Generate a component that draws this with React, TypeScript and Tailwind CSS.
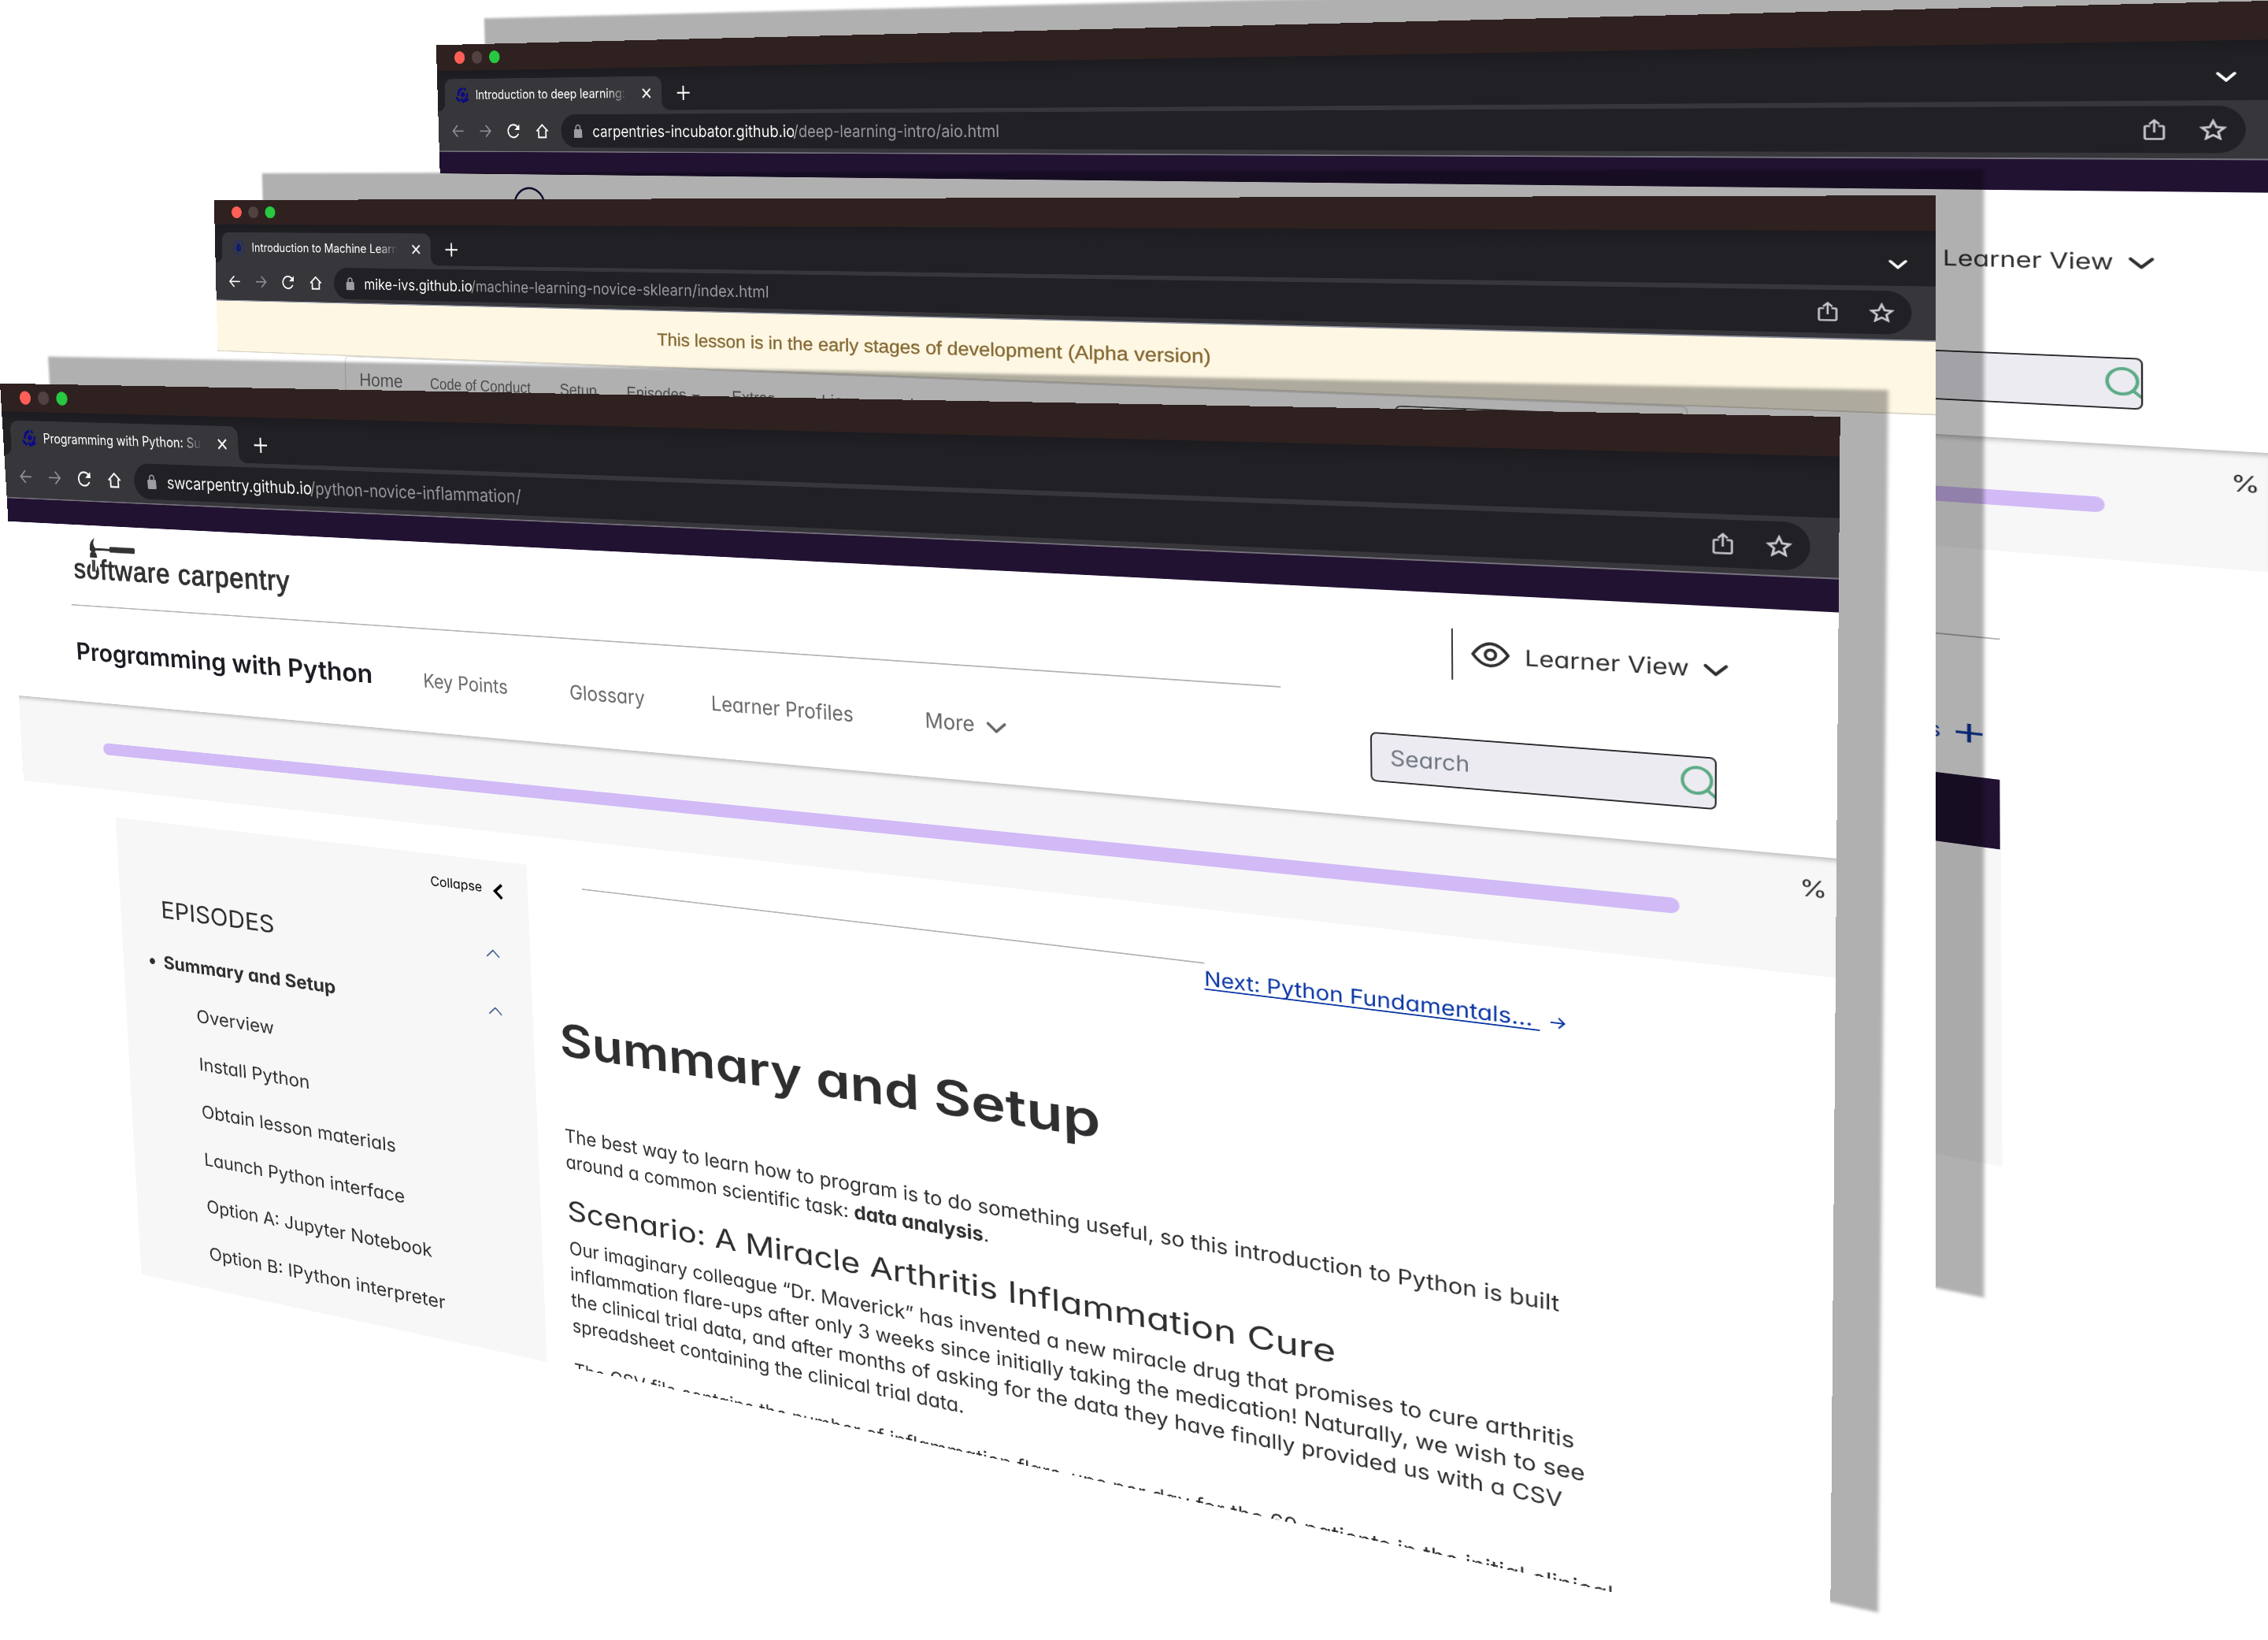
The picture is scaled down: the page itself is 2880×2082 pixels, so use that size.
import React, { useLayoutEffect, useRef, useState } from 'react';

type Quad = [number, number, number, number, number, number, number, number];

/** Projects a flat w x h rectangle onto four corners (tl, tr, br, bl). */
function project([x0, y0, x1, y1, x2, y2, x3, y3]: Quad, w: number, h: number) {
  const dx1 = x1 - x2;
  const dx2 = x3 - x2;
  const sx = x0 - x1 + x2 - x3;
  const dy1 = y1 - y2;
  const dy2 = y3 - y2;
  const sy = y0 - y1 + y2 - y3;
  const den = dx1 * dy2 - dx2 * dy1;
  const g = (sx * dy2 - dx2 * sy) / den;
  const k = (dx1 * sy - sx * dy1) / den;
  const m = [
    (x1 - x0 + g * x1) / w, (y1 - y0 + g * y1) / w, 0, g / w,
    (x3 - x0 + k * x3) / h, (y3 - y0 + k * y3) / h, 0, k / h,
    0, 0, 1, 0,
    x0, y0, 0, 1,
  ];
  return `matrix3d(${m.map((n) => n.toFixed(12)).join(',')})`;
}

/** Text stretched so that its ink fills the width of its own box. */
function Fit({ className = '', children }: { className?: string; children: React.ReactNode }) {
  const outer = useRef<HTMLSpanElement>(null);
  const inner = useRef<HTMLSpanElement>(null);
  const [fit, setFit] = useState({ scale: 1, bearing: 0 });
  useLayoutEffect(() => {
    if (!outer.current || !inner.current) return;
    const style = getComputedStyle(inner.current);
    const bearing = parseFloat(style.fontSize) * (style.fontFamily.includes('Liberation') ? 0.02 : 0.05);
    setFit({ bearing, scale: (outer.current.clientWidth + bearing * 2) / inner.current.offsetWidth });
  }, []);
  return (
    <span ref={outer} className={`block shrink-0 ${className}`}>
      <span ref={inner} className="inline-block origin-left whitespace-nowrap" style={{ transform: `translateX(${-fit.bearing}px) scaleX(${fit.scale})` }}>
        {children}
      </span>
    </span>
  );
}

function CarpentriesMark() {
  return (
    <svg viewBox="0 0 30 32" className="h-[32px] w-[30px]" fill="none" stroke="#0b0b86" strokeWidth="6">
      <circle cx="17" cy="15" r="5" fill="#0b0b86" stroke="none" />
      <path d="M7 17A10 10 0 0 1 17 4" strokeWidth="5" />
      <path d="M20 2l4 5M27 12c1 6-2 11-7 13" strokeWidth="4" />
      <path d="M1 20l9 8M13 23l6 7M19 28l10-4" strokeWidth="5" />
    </svg>
  );
}

function DimMark() {
  return (
    <svg viewBox="0 0 30 34" className="h-[34px] w-[30px]" fill="none">
      <ellipse cx="15" cy="17" rx="12" ry="14" stroke="#23306b" strokeWidth="2.500" />
      <path d="M15 7c4 4 6 8 6 12 0 4-3 6-6 6s-6-2-6-6c0-4 2-8 6-12z" fill="#101c70" />
    </svg>
  );
}

function Chevron({ className }: { className: string }) {
  return (
    <svg viewBox="0 0 28 15" className={className} fill="none" stroke="currentColor" strokeWidth="4" strokeLinecap="round" strokeLinejoin="round">
      <path d="M2 2l12 11L26 2" />
    </svg>
  );
}

type ChromeProps = {
  title: string;
  host: string;
  path: string;
  hostW: string;
  pathW: string;
  mark: React.ReactNode;
  canGoBack?: boolean;
  menu?: boolean;
  pillEnd: string;
  line: string;
};

function BrowserChrome({ title, host, path, hostW, pathW, mark, canGoBack, menu = true, pillEnd, line }: ChromeProps) {
  return (
    <div className="font-['Inter',sans-serif] text-white [font-feature-settings:normal]">
      <div className="flex h-[50px] items-center gap-[16px] bg-[#2f2120] pl-[42px]">
        <span className="size-[24px] rounded-full bg-[#ff5f57]" />
        <span className="size-[24px] rounded-full bg-[#514140]" />
        <span className="size-[24px] rounded-full bg-[#28c840]" />
      </div>
      <div className="flex h-[78px] items-end bg-linear-to-b from-[#1b1b20] to-[#212025] to-30% pl-px">
        <svg viewBox="0 0 16 16" className="size-[16px]"><path d="M16 0v16H0A16 16 0 0 0 16 0z" fill="#37363b" /></svg>
        <div className="flex h-[62px] w-[480px] items-center rounded-t-[16px] bg-[#37363b] pl-[25px]">
          {mark}
          <span className="ml-[16px] w-[340px] text-[24px] leading-[40px] tracking-[-0.1px] whitespace-nowrap [mask-image:linear-gradient(to_right,black_86%,transparent_99%)]">
            {title}
          </span>
          <svg viewBox="0 0 18 18" className="ml-[28px] size-[18px]" fill="none" stroke="white" strokeWidth="3"><path d="M1 1l16 16M17 1L1 17" /></svg>
        </div>
        <svg viewBox="0 0 16 16" className="size-[16px]"><path d="M0 0v16h16A16 16 0 0 1 0 0z" fill="#37363b" /></svg>
        <svg viewBox="0 0 26 26" className="mb-[18px] ml-[16px] size-[26px]" fill="none" stroke="white" strokeWidth="3"><path d="M13 0v26M0 13h26" /></svg>
        {menu && (
          <svg viewBox="0 0 22 13" className="mr-[33px] mb-[24px] ml-auto h-[13px] w-[22px]" fill="none" stroke="white" strokeWidth="3.500" strokeLinecap="round"><path d="M2 2l9 9 9-9" /></svg>
        )}
      </div>
      <div className={`flex h-[78px] items-center border-b-2 bg-[#37363b] pl-[32px] ${line}`}>
        <svg viewBox="0 0 26 24" className={canGoBack ? 'h-[24px] w-[26px] text-white' : 'h-[24px] w-[26px] text-[#8f8f94]'} fill="none" stroke="currentColor" strokeWidth="2.600"><path d="M26 12H2M12.500 1L1.800 12l10.700 11" /></svg>
        <svg viewBox="0 0 26 24" className="ml-[38px] h-[24px] w-[26px] text-[#8f8f94]" fill="none" stroke="currentColor" strokeWidth="2.600"><path d="M0 12h24M13.500 1l10.700 11-10.700 11" /></svg>
        <svg viewBox="0 0 28 28" className="ml-[37px] size-[28px]" fill="none" stroke="white" strokeWidth="3"><path d="M24.500 19A12 12 0 1 1 22 5.500l3 4" /><path d="M27 1v11H16z" fill="white" stroke="none" /></svg>
        <svg viewBox="0 0 28 28" className="ml-[36px] size-[28px]" fill="none" stroke="white" strokeWidth="3"><path d="M6 12.500V26h16V12.500M1.500 14.500L14 2.500l12.500 12" /></svg>
        <div className={`ml-[28px] flex h-[62px] flex-1 items-center rounded-full bg-[#202025] pl-[28px] ${pillEnd}`}>
          <svg viewBox="0 0 18 26" className="h-[26px] w-[18px]" fill="#9b9da2"><path d="M1.500 10h15a1.500 1.500 0 0 1 1.500 1.500v13a1.500 1.500 0 0 1-1.500 1.500h-15A1.500 1.500 0 0 1 0 24.500v-13A1.500 1.500 0 0 1 1.500 10z" /><path d="M4.500 11V6.500a4.500 4.500 0 0 1 9 0V11" fill="none" stroke="#9b9da2" strokeWidth="2.500" /></svg>
          <div className="ml-[24px] flex pt-[2px] text-[29px] leading-[40px]">
            <Fit className={hostW}>{host}</Fit>
            <Fit className={`text-[#9a9a9f] ${pathW}`}>{path}</Fit>
          </div>
          <svg viewBox="0 0 24 28" className="ml-auto h-[28px] w-[24px]" fill="none" stroke="#c9c9cd" strokeWidth="2.500"><path d="M7.500 9.500H3A1.500 1.500 0 0 0 1.500 11v14A1.500 1.500 0 0 0 3 26.500h18a1.500 1.500 0 0 0 1.500-1.500V11A1.500 1.500 0 0 0 21 9.500h-4.500M12 18V2M6.500 7L12 1.800 17.500 7" /></svg>
          <svg viewBox="0 0 30 28" className="mr-[20px] ml-[37px] h-[28px] w-[30px]" fill="none" stroke="#c9c9cd" strokeWidth="2.800"><path d="M15 3l3.500 8 8.500.8-6.400 5.700 1.900 8.300L15 21.400l-7.500 4.400 1.900-8.300L3 11.800l8.500-.8z" /></svg>
        </div>
      </div>
    </div>
  );
}

function Window({ quad, height, className, children }: { quad: Quad; height: number; className: string; children: React.ReactNode }) {
  const matrix = project(quad, 2880, height);
  return (
    <>
      <div className={`absolute top-0 left-0 w-[2880px] origin-top-left bg-black/31 blur-[2px] ${className}`} style={{ transform: `translate(61px,-34px) ${matrix}` }} />
      <div className={`absolute top-0 left-0 w-[2880px] origin-top-left overflow-hidden bg-white ${className}`} style={{ transform: matrix }}>
        {children}
      </div>
    </>
  );
}

function LearnerView() {
  return (
    <div className="flex h-[70px] items-center pl-[223px] text-[#2f2f31]">
      <span className="h-full w-[2px] bg-[#3a3a3c]" />
      <svg viewBox="0 0 48 34" className="mb-[4px] ml-[23px] h-[34px] w-[48px]" fill="none" stroke="currentColor" strokeWidth="3.800"><path d="M2 17C9 7 16 2 24 2s15 5 22 15c-7 10-14 15-22 15S9 27 2 17z" /><circle cx="24" cy="17" r="6.500" /></svg>
      <Fit className="mb-[2px] ml-[20px] w-[194px] text-[30px] leading-[40px]">Learner View</Fit>
      <Chevron className="ml-[18px] h-[15px] w-[29px]" />
    </div>
  );
}

function SearchBox() {
  return (
    <div className="ml-[118px] flex h-[69px] w-[426px] items-center rounded-[8px] border-2 border-[#29292b] bg-[#ecebf1] pl-[25px]">
      <Fit className="mb-[2px] w-[99px] text-[30px] leading-[40px] text-[#6e7681]">Search</Fit>
      <svg viewBox="0 0 40 42" className="mb-[2px] ml-auto h-[42px] w-[40px]" fill="none" stroke="#5dab87" strokeWidth="4"><circle cx="19" cy="19" r="17" /><path d="M31 31l10 9" /></svg>
    </div>
  );
}

function ProgressStrip({ inset = 'pl-[181px]' }: { inset?: string }) {
  return (
    <div className={`flex h-[156px] items-start bg-[#f7f7f7] pt-[22px] shadow-[inset_0_9px_7px_-6px_rgba(0,0,0,0.26)] ${inset}`}>
      <div className="mt-[50px] h-[21px] w-[2519px] rounded-full bg-[#d1baf6]" />
      <Fit className="ml-[140px] w-[28px] text-[30px] leading-[40px] text-[#2f2f31]">%</Fit>
    </div>
  );
}

function SoftwareCarpentryLogo() {
  return (
    <div className="pt-[22px] pl-[11px]">
      <svg viewBox="0 0 98 35" className="ml-[34px] h-[35px] w-[98px]" fill="#333">
        <path d="M14 0C5 4 1 12 2 22l4 4h6l3-4h30v-4H14C9 13 9 6 14 0z" />
        <rect x="44" y="14.500" width="54" height="10" rx="2.500" />
        <path d="M3 26h12l2 9H1z" />
      </svg>
      <div className="relative h-[44px]">
        <Fit className="w-[446px] font-['Liberation_Sans',sans-serif] text-[49px] leading-[43px] tracking-[1.500px] text-[#333] [-webkit-text-stroke:1.500px_#333]">software carpentry</Fit>
        <span className="absolute top-[2px] left-[36px] h-[20px] w-[13px] bg-white" />
        <span className="absolute top-[4px] left-[39px] h-[21px] w-[7px] bg-[#4a4a4a]" />
      </div>
    </div>
  );
}

const sections = [
  { label: 'Overview', width: 'w-[157px]' },
  { label: 'Install Python', width: 'w-[224px]' },
  { label: 'Obtain lesson materials', width: 'w-[390px]' },
  { label: 'Launch Python interface', width: 'w-[403px]' },
  { label: 'Option A: Jupyter Notebook', width: 'w-[451px]' },
  { label: 'Option B: IPython interpreter', width: 'w-[472px]' },
];

function Caret() {
  return (
    <svg viewBox="0 0 25 14" className="h-[14px] w-[25px]" fill="none" stroke="#3a5590" strokeWidth="2.200"><path d="M1 13L12.500 2 24 13" /></svg>
  );
}

function Sidebar() {
  return (
    <aside className="mt-[49px] ml-[199px] h-[900px] w-[813px] shrink-0 bg-[#f7f7f7] text-[#2f2f31]">
      <div className="flex h-[68px] items-end pl-[634px] text-black">
        <Fit className="w-[94px] text-[22px] leading-[44px]">Collapse</Fit>
        <svg viewBox="0 0 18 27" className="mb-[4px] ml-[21px] h-[27px] w-[18px]" fill="none" stroke="black" strokeWidth="5"><path d="M16.500 2L4 13.500 16.500 25" /></svg>
      </div>
      <div className="mt-[64px] flex items-center pl-[89px]">
        <Fit className="w-[231px] text-[42px] leading-[50px]">EPISODES</Fit>
      </div>
      <div className="-mt-[33px] flex justify-end pr-[56px]"><Caret /></div>
      <div className="mt-[65px] flex items-center pl-[57px]">
        <span className="size-[11px] rounded-full bg-[#2f2f31]" />
        <Fit className="ml-[20px] w-[350px] text-[32px] leading-[50px] font-bold">Summary and Setup</Fit>
        <span className="ml-[294px]"><Caret /></span>
      </div>
      <div className="mt-[21px] pl-[152px]">
        {sections.map((s) => (
          <Fit key={s.label} className={`text-[32px] leading-[86.5px] ${s.width}`}>{s.label}</Fit>
        ))}
      </div>
    </aside>
  );
}

function Article() {
  return (
    <article className="ml-[51px] text-[#2f2f31]">
      <div className="flex h-[122px] items-start pl-[47px]">
        <span className="mt-[78px] h-[2px] w-[979px] bg-[#b3b3b3]" />
        <Fit className="mt-[81px] ml-px w-[439px] text-[30px] leading-[40px] text-[#0a36a5]">
          <a className="underline decoration-2 underline-offset-[4px] [text-decoration-skip-ink:none]">Next: Python Fundamentals...&nbsp;</a>
        </Fit>
        <svg viewBox="0 0 19 16" className="mt-[96px] ml-[15px] h-[16px] w-[19px]" fill="none" stroke="#0a36a5" strokeWidth="2.200"><path d="M0 8h17M10 1l7 7-7 7" /></svg>
      </div>
      <Fit className="mt-[167px] w-[869px] text-[75px] leading-[90px] font-semibold">Summary and Setup</Fit>
      <div className="mt-[94px] text-[31px] leading-[44px]">
        <Fit className="w-[1490px]">The best way to learn how to program is to do something useful, so this introduction to Python is built</Fit>
        <Fit className="w-[701px]">around a common scientific task: <b>data analysis</b>.</Fit>
      </div>
      <Fit className="mt-[32px] w-[1197px] text-[46px] leading-[56px]">Scenario: A Miracle Arthritis Inflammation Cure</Fit>
      <div className="mt-[14px] text-[31px] leading-[44px]">
        <Fit className="w-[1508px]">Our imaginary colleague “Dr. Maverick” has invented a new miracle drug that promises to cure arthritis</Fit>
        <Fit className="w-[1521px]">inflammation flare-ups after only 3 weeks since initially taking the medication! Naturally, we wish to see</Fit>
        <Fit className="w-[1493px]">the clinical trial data, and after months of asking for the data they have finally provided us with a CSV</Fit>
        <Fit className="w-[656px]">spreadsheet containing the clinical trial data.</Fit>
        <Fit className="mt-[32px] w-[1556px]">The CSV file contains the number of inflammation flare-ups per day for the 60 patients in the initial clinical</Fit>
      </div>
    </article>
  );
}

function PythonLesson() {
  return (
    <>
      <BrowserChrome title="Programming with Python: Sum" host="swcarpentry.github.io" path="/python-novice-inflammation/" hostW="w-[288px]" pathW="w-[391px]" mark={<CarpentriesMark />} menu={false} pillEnd="mr-[32px]" line="border-[#77737b]" />
      <div className="h-[42px] bg-[#211232]" />
      <header className="flex h-[317px] pl-[129px]">
        <div className="w-[2070px]">
          <SoftwareCarpentryLogo />
          <div className="mt-[42px] h-[2px] bg-[#b3b3b3]" />
          <nav className="mt-[51px] flex items-baseline pl-[7px] text-[32px] text-[#666669]">
            <Fit className="w-[601px] text-[43px] leading-[60px] font-semibold text-[#1c1c24]">Programming with Python</Fit>
            <Fit className="ml-[100px] w-[152px]">Key Points</Fit>
            <Fit className="ml-[114px] w-[128px]">Glossary</Fit>
            <Fit className="ml-[115px] w-[228px]">Learner Profiles</Fit>
            <Fit className="ml-[114px] w-[72px]">More</Fit>
            <Chevron className="ml-[20px] h-[16px] w-[29px]" />
          </nav>
        </div>
        <div className="pt-[48px]">
          <LearnerView />
          <div className="pt-[80px]"><SearchBox /></div>
        </div>
      </header>
      <ProgressStrip />
      <div className="flex">
        <Sidebar />
        <Article />
      </div>
    </>
  );
}

function MachineLearningLesson() {
  return (
    <>
      <BrowserChrome title="Introduction to Machine Learni" host="mike-ivs.github.io" path="/machine-learning-novice-sklearn/index.html" hostW="w-[235px]" pathW="w-[591px]" mark={<DimMark />} canGoBack pillEnd="mr-[28px]" line="border-[#8d90a0]" />
      <div className="flex h-[104px] items-center border-b-2 border-[#d9d5c6] bg-[#fdf7e3] pt-[2px] pl-[962px]">
        <Fit className="w-[956px] font-['Liberation_Sans',sans-serif] text-[32px] leading-[40px] text-[#866a35] [-webkit-text-stroke:0.500px_#866a35]">This lesson is in the early stages of development (Alpha version)</Fit>
      </div>
      <div className="ml-[300px] h-[200px] w-[2281px] rounded-[8px] border-2 border-[#dedede] pt-[14px] pl-[31px] font-['Liberation_Sans',sans-serif] text-[30px] text-[#6b6b6b]">
        <div className="flex items-baseline">
          <Fit className="w-[96px] text-[36px] leading-[60px]">Home</Fit>
          <Fit className="ml-[61px] w-[214px]">Code of Conduct</Fit>
          <Fit className="ml-[61px] w-[74px]">Setup</Fit>
          <Fit className="ml-[61px] w-[115px]">Episodes</Fit>
          <svg viewBox="0 0 16 8" className="mt-[31px] ml-[12px] h-[8px] w-[16px] self-start" fill="#666"><path d="M0 0h16L8 8z" /></svg>
          <Fit className="ml-[61px] w-[80px]">Extras</Fit>
          <Fit className="ml-[86px] w-[100px]">License</Fit>
          <Fit className="ml-[57px] w-[222px]">Improve this page</Fit>
          <svg viewBox="0 0 24 24" className="ml-[8px] size-[24px]" fill="#666"><path d="M0 24l2-8L17 1l6 6L8 22z" /></svg>
          <div className="ml-auto h-[64px] w-[390px] self-start rounded-[8px] border-2 border-[#444]" />
        </div>
      </div>
    </>
  );
}

function DeepLearningLesson() {
  return (
    <>
      <BrowserChrome title="Introduction to deep learning:" host="carpentries-incubator.github.io" path="/deep-learning-intro/aio.html" hostW="w-[414px]" pathW="w-[381px]" mark={<CarpentriesMark />} pillEnd="mr-[23px]" line="border-[#77757f]" />
      <div className="h-[42px] bg-[#211232]" />
      <header className="flex h-[339px] pl-[131px]">
        <div className="w-[2070px] pt-[24px] pl-[37px]">
          <svg viewBox="0 0 72 72" className="size-[72px]" fill="none" stroke="#14103f" strokeWidth="4"><circle cx="36" cy="36" r="34" /></svg>
        </div>
        <div className="pt-[60px]">
          <LearnerView />
          <div className="pt-[92px]"><SearchBox /></div>
        </div>
      </header>
      <ProgressStrip inset="pl-[183px]" />
      <div className="w-[2581px] pl-[1110px]">
        <div className="mt-[121px] h-[2px] bg-[#b3b3b3]" />
        <div className="mt-[114px] flex h-[40px] items-center justify-end pr-[21px]">
          <span className="text-[29px] leading-[40px] text-[#0a36a5]">Expand All Solutions</span>
          <svg viewBox="0 0 32 30" className="ml-[18px] h-[30px] w-[32px]" fill="none" stroke="#0a36a5"><path d="M16 2v26" strokeWidth="4.500" /><path d="M0 15h32" strokeWidth="3.500" /></svg>
        </div>
        <div className="mt-[40px] h-[97px] w-[1470px] bg-[#211232]" />
        <div className="h-[444px] bg-[#f7f7f7]" />
      </div>
    </>
  );
}

export default function App() {
  return (
    <main className="relative h-[2082px] w-[2880px] overflow-hidden bg-white font-['Inter',sans-serif] [font-feature-settings:'cv11']">
      <Window quad={[553.8, 57.3, 2880, 1, 2879.6, 1497, 584, 1063]} height={1548} className="h-[1700px]">
        <DeepLearningLesson />
      </Window>
      <Window quad={[271.8, 254, 2459, 248.2, 2459, 1681.7, 295.2, 1242]} height={1611} className="h-[1611px]">
        <MachineLearningLesson />
      </Window>
      <Window quad={[0, 486.7, 2337.5, 529.3, 2324.5, 2081.5, 66, 1593]} height={1611} className="h-[1611px]">
        <PythonLesson />
      </Window>
    </main>
  );
}
